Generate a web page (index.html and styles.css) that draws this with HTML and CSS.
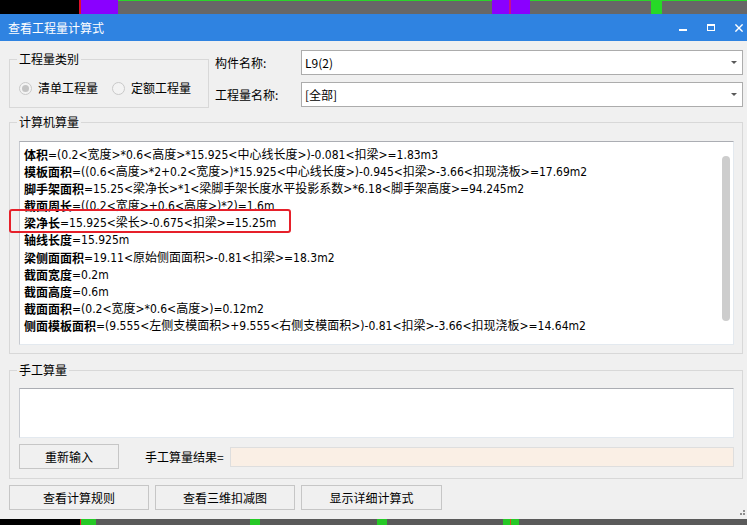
FILE: index.html
```html
<!DOCTYPE html>
<html lang="zh-CN">
<head>
<meta charset="utf-8">
<title>查看工程量计算式</title>
<link rel="stylesheet" href="styles.css">
</head>
<body>
<div class="strip-top"></div>
<div class="dialog">
  <div class="titlebar">
    <span class="title">查看工程量计算式</span>
    <div class="controls">
      <svg width="8" height="8" viewBox="0 0 8 8"><rect x="0" y="5" width="8" height="2" fill="#fff"/></svg>
      <svg width="8" height="8" viewBox="0 0 8 8"><rect x="0.5" y="0.5" width="7" height="6" fill="none" stroke="#fff"/><rect x="0" y="0" width="8" height="2" fill="#fff"/></svg>
      <svg width="8" height="8" viewBox="0 0 8 8"><path d="M0.4 0.4 L7.6 7.6 M7.6 0.4 L0.4 7.6" stroke="#fff" stroke-width="1.4" fill="none"/></svg>
    </div>
  </div>
  <div class="body">
    <div class="row1">
      <fieldset class="group g1">
        <legend>工程量类别</legend>
        <div class="radios">
          <span class="radio"><span class="dot on"><i></i></span>清单工程量</span>
          <span class="radio"><span class="dot"></span>定额工程量</span>
        </div>
      </fieldset>
      <div class="form">
        <div class="field"><label>构件名称:</label><div class="combo"><span>L9(2)</span><span class="arrow"></span></div></div>
        <div class="field"><label>工程量名称:</label><div class="combo"><span>[全部]</span><span class="arrow"></span></div></div>
      </div>
    </div>

    <fieldset class="group g2">
      <legend>计算机算量</legend>
      <div class="calc">
        <p><b>体积</b>=(0.2&lt;宽度&gt;*0.6&lt;高度&gt;*15.925&lt;中心线长度&gt;)-0.081&lt;扣梁&gt;=1.83m3</p>
        <p><b>模板面积</b>=((0.6&lt;高度&gt;*2+0.2&lt;宽度&gt;)*15.925&lt;中心线长度&gt;)-0.945&lt;扣梁&gt;-3.66&lt;扣现浇板&gt;=17.69m2</p>
        <p><b>脚手架面积</b>=15.25&lt;梁净长&gt;*1&lt;梁脚手架长度水平投影系数&gt;*6.18&lt;脚手架高度&gt;=94.245m2</p>
        <p><b>截面周长</b>=((0.2&lt;宽度&gt;+0.6&lt;高度&gt;)*2)=1.6m</p>
        <p><b>梁净长</b>=15.925&lt;梁长&gt;-0.675&lt;扣梁&gt;=15.25m</p>
        <p><b>轴线长度</b>=15.925m</p>
        <p><b>梁侧面面积</b>=19.11&lt;原始侧面面积&gt;-0.81&lt;扣梁&gt;=18.3m2</p>
        <p><b>截面宽度</b>=0.2m</p>
        <p><b>截面高度</b>=0.6m</p>
        <p><b>截面面积</b>=(0.2&lt;宽度&gt;*0.6&lt;高度&gt;)=0.12m2</p>
        <p><b>侧面模板面积</b>=(9.555&lt;左侧支模面积&gt;+9.555&lt;右侧支模面积&gt;)-0.81&lt;扣梁&gt;-3.66&lt;扣现浇板&gt;=14.64m2</p>
        <div class="thumb"></div>
        <div class="mark"></div>
      </div>
    </fieldset>

    <fieldset class="group g3">
      <legend>手工算量</legend>
      <div class="manual"></div>
      <div class="mrow">
        <button class="btn small">重新输入</button>
        <span class="mlabel">手工算量结果=</span>
        <div class="result"></div>
      </div>
    </fieldset>

    <div class="actions">
      <button class="btn">查看计算规则</button>
      <button class="btn">查看三维扣减图</button>
      <button class="btn wide">显示详细计算式</button>
    </div>

    <svg class="grip" width="6" height="5" viewBox="0 0 6 5"><rect x="3" y="0" width="2" height="2" fill="#8e8e8e"/><rect x="0" y="3" width="2" height="2" fill="#8e8e8e"/><rect x="3" y="3" width="2" height="2" fill="#8e8e8e"/></svg>
  </div>
</div>
<div class="strip-bottom"></div>
</body>
</html>
```

FILE: styles.css
```css
* { box-sizing: border-box; }

body {
  margin: 0;
  width: 747px;
  height: 525px;
  overflow: hidden;
  font-family: "Noto Sans CJK SC", "Noto Sans", sans-serif;
  font-size: 12px;
  color: #000;
  background: #666;
}

.strip-top {
  height: 14px;
  background:
    linear-gradient(to right, transparent 118px, #2bd42b 118px, #2bd42b 492px, transparent 492px, transparent 530px, #2bd42b 530px) top left / 100% 1px no-repeat,
    linear-gradient(to right,
      #000 0 79px, #e0102a 79px 81px, #8a00ff 81px 118px,
      #676767 118px 492px, #8a00ff 492px 509px, #c8108a 509px 511px,
      #8a00ff 511px 530px, #676767 530px 651px, #26d926 651px 662px, #676767 662px);
}

.strip-bottom {
  height: 6px;
  background: linear-gradient(to right,
    #000 0 80px, #e0102a 80px 81px, #26c926 81px 96px, #5a5a5a 96px 250px,
    #26c926 250px 260px, #5a5a5a 260px 377px, #26c926 377px 387px,
    #5a5a5a 387px 503px, #26c926 503px 510px, #d2501a 510px 511px,
    #26c926 511px 519px, #5a5a5a 519px);
}

.titlebar {
  height: 27px;
  background: #2f83e1;
  color: #fff;
  display: flex;
  align-items: center;
  justify-content: space-between;
  padding: 0 4px 0 8px;
}

.title { line-height: 16px; }

.controls {
  display: flex;
  align-items: center;
  gap: 20px;
}
.controls svg { display: block; }

.body {
  position: relative;
  height: 478px;
  background: #f0f0f0;
  padding: 9px 4px 0 9px;
}

.row1 {
  display: flex;
  height: 58px;
}

.group {
  margin: 0;
  min-width: 0;
  border: 1px solid #d8d8d8;
}

.group legend {
  padding: 0 2px;
  margin-left: -2px;
  line-height: 16px;
}

.g1 {
  width: 200px;
  margin-top: 1px;
  padding: 13px 9px 11px 9px;
}

.radios {
  display: flex;
  align-items: center;
  height: 16px;
}

.radio {
  display: flex;
  align-items: center;
  gap: 6px;
  line-height: 16px;
}
.radio + .radio { margin-left: 14px; }

.dot {
  width: 13px;
  height: 13px;
  border-radius: 50%;
  border: 1px solid #c9c9c9;
  background: #f3f3f3;
  display: flex;
  align-items: center;
  justify-content: center;
}
.dot i {
  width: 7px;
  height: 7px;
  border-radius: 50%;
  background: #c4c4c4;
}

.form {
  flex: 1;
  margin-left: 6px;
  display: flex;
  flex-direction: column;
  gap: 7px;
}

.field {
  display: flex;
  align-items: center;
  height: 25px;
}
.field label { width: 86px; line-height: 16px; }

.combo {
  flex: 1;
  height: 25px;
  border: 1px solid #acacac;
  background: #fff;
  display: flex;
  align-items: center;
  justify-content: space-between;
  padding: 0 5px 0 3px;
  line-height: 16px;
}

.arrow {
  width: 0;
  height: 0;
  border-left: 3px solid transparent;
  border-right: 3px solid transparent;
  border-top: 3px solid #595959;
}

.g2 {
  margin-top: 6px;
  padding: 11px 8px 8px 9px;
}

.calc {
  position: relative;
  height: 204px;
  background: #fff;
  border: 1px solid;
  border-color: #abadb3 #e3e9ef #e3e9ef #c8cbd1;
  padding: 5px 4px 3px;
  font-family: "DejaVu Sans Condensed", "Noto Sans", "Noto Sans CJK SC", sans-serif;
  font-size: 12px;
  line-height: 17.1px;
  white-space: nowrap;
}
.calc p {
  margin: 0;
  height: 17.1px;
}
.calc b {
  font-weight: bold;
  font-family: "Noto Sans CJK SC", sans-serif;
  line-height: 12px;
  vertical-align: -1px;
}

.thumb {
  position: absolute;
  top: 14px;
  right: 3px;
  width: 8px;
  height: 165px;
  border-radius: 4px;
  background: #cdcdcd;
}

.mark {
  position: absolute;
  left: -11px;
  top: 67px;
  width: 282px;
  height: 24px;
  border: 2px solid #e6202a;
  border-radius: 3px;
}

.g3 {
  margin-top: 8px;
  padding: 10px 8px 9px 9px;
}

.manual {
  height: 50px;
  background: #fff;
  border: 1px solid;
  border-color: #abadb3 #e3e9ef #e3e9ef #c8cbd1;
}

.mrow {
  display: flex;
  align-items: center;
  height: 25px;
  margin-top: 6px;
}

.btn {
  height: 25px;
  width: 140px;
  padding: 0;
  border: 1px solid #c6c6c6;
  border-radius: 0;
  background: #f0f0f0;
  font: inherit;
  line-height: 16px;
  color: #000;
  display: flex;
  align-items: center;
  justify-content: center;
}
.btn.small { width: 100px; }
.btn.wide { width: 141px; }

.mlabel { margin-left: 26px; line-height: 16px; }

.result {
  flex: 1;
  height: 20px;
  margin-left: 6px;
  background: #faefe5;
  border: 1px solid #dedede;
}

.actions {
  display: flex;
  gap: 6px;
  margin-top: 6px;
}

.grip {
  position: absolute;
  right: 1px;
  bottom: 4px;
  display: block;
}
```
